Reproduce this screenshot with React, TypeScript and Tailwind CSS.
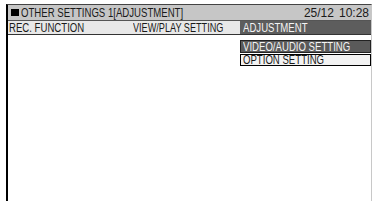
export default function App() {
  const font = { fontFamily: '"Liberation Sans", Arial, sans-serif' }
  const label = 'inline-block scale-x-[0.8] origin-left whitespace-nowrap'
  return (
    <div className="w-[373px] h-[201px] bg-white overflow-hidden" style={font}>
      <div className="ml-[6px] mt-[4px] w-[366px] h-[197px] border-l-2 border-l-black border-t border-t-[#444] border-r border-r-[#c8c8c8] flex flex-col">
        {/* title bar */}
        <div className="h-[16px] bg-[#c6c6c6] border-b border-b-[#555] flex items-center pl-[3px] pr-[2px] text-[12px] leading-none text-[#1a1a1a]">
          <span className="w-[8px] h-[7px] bg-black mr-[2px] shrink-0" />
          <span className={label}>OTHER SETTINGS 1[ADJUSTMENT]</span>
          <span className="ml-auto whitespace-nowrap flex gap-[5px]">
            <span>25/12</span>
            <span>10:28</span>
          </span>
        </div>
        {/* tabs */}
        <div className="h-[14px] bg-[#e8e8e8] border-b border-b-[#333] flex text-[12px] leading-none text-[#1a1a1a]">
          <div className="w-[232px] flex items-center pl-[1px]">
            <span className="w-[124px] shrink-0"><span className={label}>REC. FUNCTION</span></span>
            <span className="inline-block scale-x-[0.76] origin-left whitespace-nowrap">VIEW/PLAY SETTING</span>
          </div>
          <div className="flex-1 bg-[#5d5d5d] text-[#f4f4f4] flex items-center pl-[3px]">
            <span className={label}>ADJUSTMENT</span>
          </div>
        </div>
        {/* menu */}
        <div className="ml-[232px] mt-[5px] w-[131px] flex flex-col gap-[1px] text-[12px] leading-none">
          <div className="h-[13px] bg-[#5a5a5a] border border-[#222] text-[#f4f4f4] flex items-center pl-[2px]">
            <span className={label}>VIDEO/AUDIO SETTING</span>
          </div>
          <div className="h-[12px] bg-[#f2f2f2] border border-black text-[#1a1a1a] flex items-center pl-[2px]">
            <span className={label}>OPTION SETTING</span>
          </div>
        </div>
      </div>
    </div>
  )
}
